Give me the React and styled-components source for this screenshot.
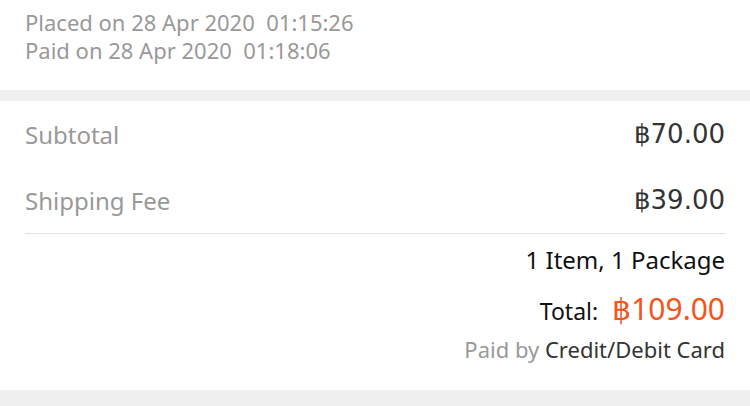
import React from "react";
import styled, { createGlobalStyle } from "styled-components";

const GlobalStyle = createGlobalStyle`
  html, body {
    margin: 0;
    padding: 0;
    background: #f0f0f0;
  }
  body {
    font-family: "Noto Sans", "Open Sans", sans-serif;
  }
`;

const Page = styled.div`
  width: 750px;
  height: 406px;
  background: #f0f0f0;
  overflow: hidden;
`;

const Section = styled.section`
  background: #ffffff;
  padding: ${(p) => p.$pad || "0 25px"};
  margin-bottom: ${(p) => p.$gap || "0"};
`;

const Stamp = styled.div`
  font-size: 22px;
  line-height: 28px;
  color: #999999;
  white-space: pre;
`;

const Row = styled.div`
  display: flex;
  justify-content: space-between;
  align-items: center;
  height: 66px;
`;

const Label = styled.span`
  font-size: 24px;
  color: #999999;
`;

const Amount = styled.span`
  font-family: "DejaVu Sans", sans-serif;
  font-size: 26px;
  color: #333333;
`;

const Divider = styled.hr`
  border: 0;
  border-top: 1px solid #e2e2e2;
  margin: 0;
`;

const Summary = styled.div`
  display: flex;
  flex-direction: column;
  align-items: flex-end;
  padding: 9px 0 26px;
`;

const Count = styled.div`
  font-size: 24px;
  line-height: 34px;
  color: #111111;
`;

const TotalLine = styled.div`
  display: flex;
  align-items: baseline;
  gap: 14px;
  margin-top: 14px;
  font-size: 23px;
  line-height: 36px;
  color: #111111;
`;

const TotalAmount = styled.span`
  font-size: 30px;
  color: #f5541c;
`;

const PaidBy = styled.div`
  margin-top: 5px;
  font-size: 22px;
  line-height: 30px;
  color: #999999;

  span {
    color: #333333;
  }
`;

export default function App() {
  return (
    <Page>
      <GlobalStyle />
      <Section $pad="8px 25px 26px" $gap="11px">
        <Stamp>Placed on 28 Apr 2020  01:15:26</Stamp>
        <Stamp>Paid on 28 Apr 2020  01:18:06</Stamp>
      </Section>
      <Section>
        <Row>
          <Label>Subtotal</Label>
          <Amount>฿70.00</Amount>
        </Row>
        <Row>
          <Label>Shipping Fee</Label>
          <Amount>฿39.00</Amount>
        </Row>
        <Divider />
        <Summary>
          <Count>1 Item, 1 Package</Count>
          <TotalLine>
            Total:
            <TotalAmount>฿109.00</TotalAmount>
          </TotalLine>
          <PaidBy>
            Paid by <span>Credit/Debit Card</span>
          </PaidBy>
        </Summary>
      </Section>
    </Page>
  );
}
